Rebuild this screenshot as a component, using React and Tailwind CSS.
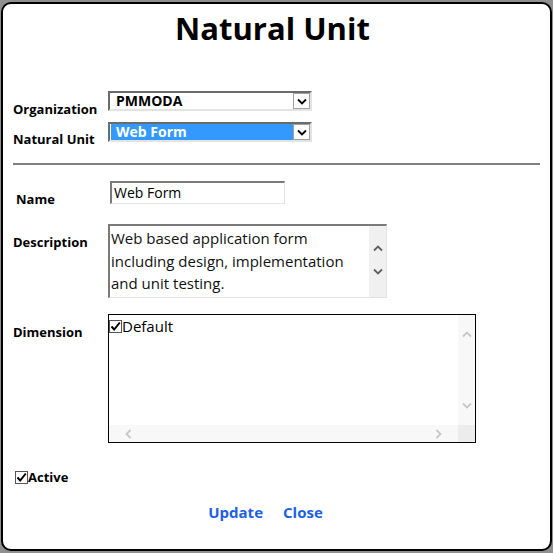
import React from 'react';

const Chevron = ({ dir = 'down', color = '#000', className = '' }) => {
  const paths = {
    down: 'M1 1.5 L5 5.5 L9 1.5',
    up: 'M1 5.5 L5 1.5 L9 5.5',
    left: 'M5.5 1 L1.5 5 L5.5 9',
    right: 'M1.5 1 L5.5 5 L1.5 9',
  };
  const vert = dir === 'up' || dir === 'down';
  return (
    <svg width={vert ? 10 : 7} height={vert ? 7 : 10} viewBox={vert ? '0 0 10 7' : '0 0 7 10'} className={className}>
      <path d={paths[dir]} fill="none" stroke={color} strokeWidth="1.8" />
    </svg>
  );
};

const Select = ({ value, selected }) => (
  <div className="flex h-[20px] w-[204px] border-t-2 border-l-2 border-t-[#6b6b6b] border-l-[#6b6b6b] border-b-2 border-r-2 border-b-[#e3e3e3] border-r-[#e3e3e3] bg-white">
    <div className={`flex-1 text-[14px] font-bold leading-[16px] ${selected ? 'bg-[#3399ff] text-white ml-px pl-[5px]' : 'text-black pl-[6px]'}`}>
      {value}
    </div>
    <div className="flex w-[17px] items-center justify-center border border-[#a0a0a0] bg-[#fdfdfd]">
      <Chevron dir="down" />
    </div>
  </div>
);

const Check = () => (
  <span className="inline-flex h-[13px] w-[13px] items-center justify-center border border-[#555] bg-white">
    <svg width="11" height="11" viewBox="0 0 11 11">
      <path d="M1.5 5.5 L4.2 8.5 L9.8 1.5" fill="none" stroke="#000" strokeWidth="2" />
    </svg>
  </span>
);

export default function App() {
  return (
    <div className="min-h-[553px] bg-[#8f8f8f] px-px pt-[2px] pb-[2px]" style={{ fontFamily: '"Open Sans", sans-serif' }}>
      <div className="h-[549px] rounded-[10px] border-2 border-black bg-white px-[10px]">
        <h1 className="pt-[4px] pr-[8px] text-center text-[31px] font-bold leading-[40px] text-black">Natural Unit</h1>

        <div className="mt-[43px] flex h-[20px] items-start">
          <div className="w-[95px] pt-[10px] text-[13px] font-bold leading-[16px]">Organization</div>
          <Select value="PMMODA" />
        </div>
        <div className="mt-[11px] flex h-[20px] items-start">
          <div className="w-[95px] pt-[9px] text-[13px] font-bold leading-[16px]">Natural Unit</div>
          <Select value="Web Form" selected />
        </div>

        <div className="mt-[21px] h-[2px] bg-[#808080]" />

        <div className="mt-[16px] flex h-[23px] items-start">
          <div className="w-[97px] pl-[3px] pt-[10px] text-[13px] font-bold leading-[16px]">Name</div>
          <div className="h-[23px] w-[175px] border-t-2 border-l-2 border-t-[#7a7a7a] border-l-[#7a7a7a] border-b border-r border-b-[#e3e3e3] border-r-[#e3e3e3] pl-[2px] text-[14px] leading-[19px]">
            Web Form
          </div>
        </div>

        <div className="mt-[20px] flex h-[74px] items-start">
          <div className="w-[95px] pt-[10px] text-[13px] font-bold leading-[16px]">Description</div>
          <div className="flex h-[74px] w-[279px] border-t-2 border-l-2 border-t-[#7a7a7a] border-l-[#7a7a7a] border-b border-r border-b-[#e3e3e3] border-r-[#e3e3e3]">
            <div className="flex-1 pl-[1px] pt-[1px] text-[15px] leading-[22.5px] text-[#111]">
              Web based application form including design, implementation and unit testing.
            </div>
            <div className="flex w-[17px] flex-col items-center gap-[16px] bg-[#f0f0f0] pt-[19px]">
              <Chevron dir="up" color="#606060" />
              <Chevron dir="down" color="#606060" />
            </div>
          </div>
        </div>

        <div className="mt-[16px] flex h-[129px] items-start">
          <div className="w-[95px] pt-[10px] text-[13px] font-bold leading-[16px]">Dimension</div>
          <div className="flex h-[129px] w-[368px] flex-col border border-black">
            <div className="flex flex-1">
              <div className="flex-1 pt-[1px]">
                <label className="flex items-center text-[15px] leading-[20px]">
                  <Check />
                  <span>Default</span>
                </label>
              </div>
              <div className="flex w-[17px] flex-col items-center justify-between bg-[#f8f8f8] pt-[16px] pb-[16px]">
                <Chevron dir="up" color="#c8c8c8" />
                <Chevron dir="down" color="#c8c8c8" />
              </div>
            </div>
            <div className="flex h-[17px]">
              <div className="flex flex-1 items-center justify-between bg-[#f8f8f8] px-[16px]">
                <Chevron dir="left" color="#c8c8c8" />
                <Chevron dir="right" color="#c8c8c8" />
              </div>
              <div className="w-[17px] bg-[#ececec]" />
            </div>
          </div>
        </div>

        <div className="mt-[26px] flex items-center pl-[2px] text-[13px] font-bold leading-[16px]">
          <Check />
          <span>Active</span>
        </div>

        <div className="mt-[17px] flex justify-center gap-[20px] pr-[22px] text-[15px] font-bold leading-[20px] text-[#1d5fe6]">
          <a href="#" className="cursor-pointer">Update</a>
          <a href="#" className="cursor-pointer">Close</a>
        </div>
      </div>
    </div>
  );
}
